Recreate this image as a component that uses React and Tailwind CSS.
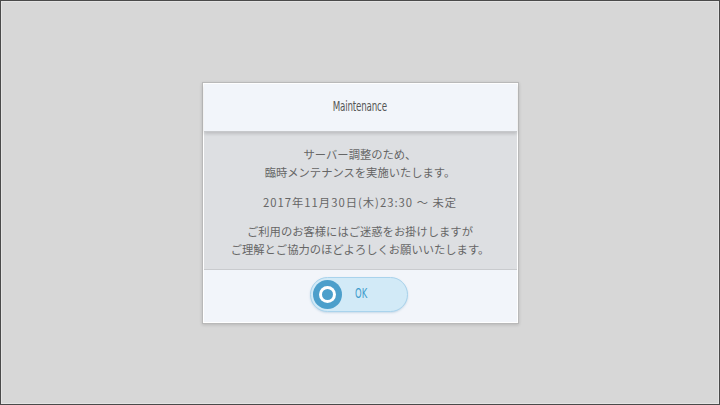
export default function App() {
  const jp = { fontFamily: '"Noto Sans CJK JP", "Noto Sans", sans-serif' };
  const cond = { fontFamily: '"DejaVu Sans Condensed", "DejaVu Sans", sans-serif' };

  return (
    <div className="w-[720px] h-[405px] bg-[#4a4a4a] p-px">
      <div className="w-full h-full bg-[#d7d7d7] border border-[#e4e4e4] flex items-start justify-center pt-[80px]">
        <div className="w-[317px] border border-[#b9b9b9] shadow-[0_1px_3px_rgba(0,0,0,0.15)] bg-white p-px flex flex-col">
          <div className="h-[48px] bg-[#f2f5fa] flex items-center justify-center border-b border-[#c6c8cb] shadow-[0_2px_3px_rgba(0,0,0,0.14)] relative z-10">
            <span
              className="text-[11px] text-[#555] scale-y-[1.3] scale-x-[0.88] tracking-[-0.2px]"
              style={cond}
            >
              Maintenance
            </span>
          </div>
          <div
            className="h-[137px] bg-[#dddfe2] flex flex-col items-center pt-[13px] text-[11.3px] leading-[18px] text-[#666]"
            style={jp}
          >
            <p>サーバー調整のため、</p>
            <p>臨時メンテナンスを実施いたします。</p>
            <p className="mt-[12px] tracking-[1px]">2017年11月30日(木)23:30 ～ 未定</p>
            <p className="mt-[11px]">ご利用のお客様にはご迷惑をお掛けしますが</p>
            <p>ご理解とご協力のほどよろしくお願いいたします。</p>
          </div>
          <div className="h-[53px] bg-[#f2f5fa] border-t border-[#c9cbce] flex items-center justify-center">
            <button className="w-[98px] h-[35px] rounded-full bg-[#d2eaf7] border border-[#a9d3ec] shadow-[0_1px_2px_rgba(80,140,180,0.25)] flex items-center pl-[2px] mr-[3px] mb-[4px]">
              <span className="w-[29px] h-[29px] rounded-full bg-[#4c9fcb] flex items-center justify-center">
                <span className="w-[17px] h-[17px] rounded-full bg-white flex items-center justify-center">
                  <span className="w-[11px] h-[11px] rounded-full bg-[#4c9fcb]" />
                </span>
              </span>
              <span
                className="ml-[12px] text-[11px] text-[#3f9ccc] scale-y-[1.35] scale-x-[0.85]"
                style={cond}
              >
                OK
              </span>
            </button>
          </div>
        </div>
      </div>
    </div>
  );
}
